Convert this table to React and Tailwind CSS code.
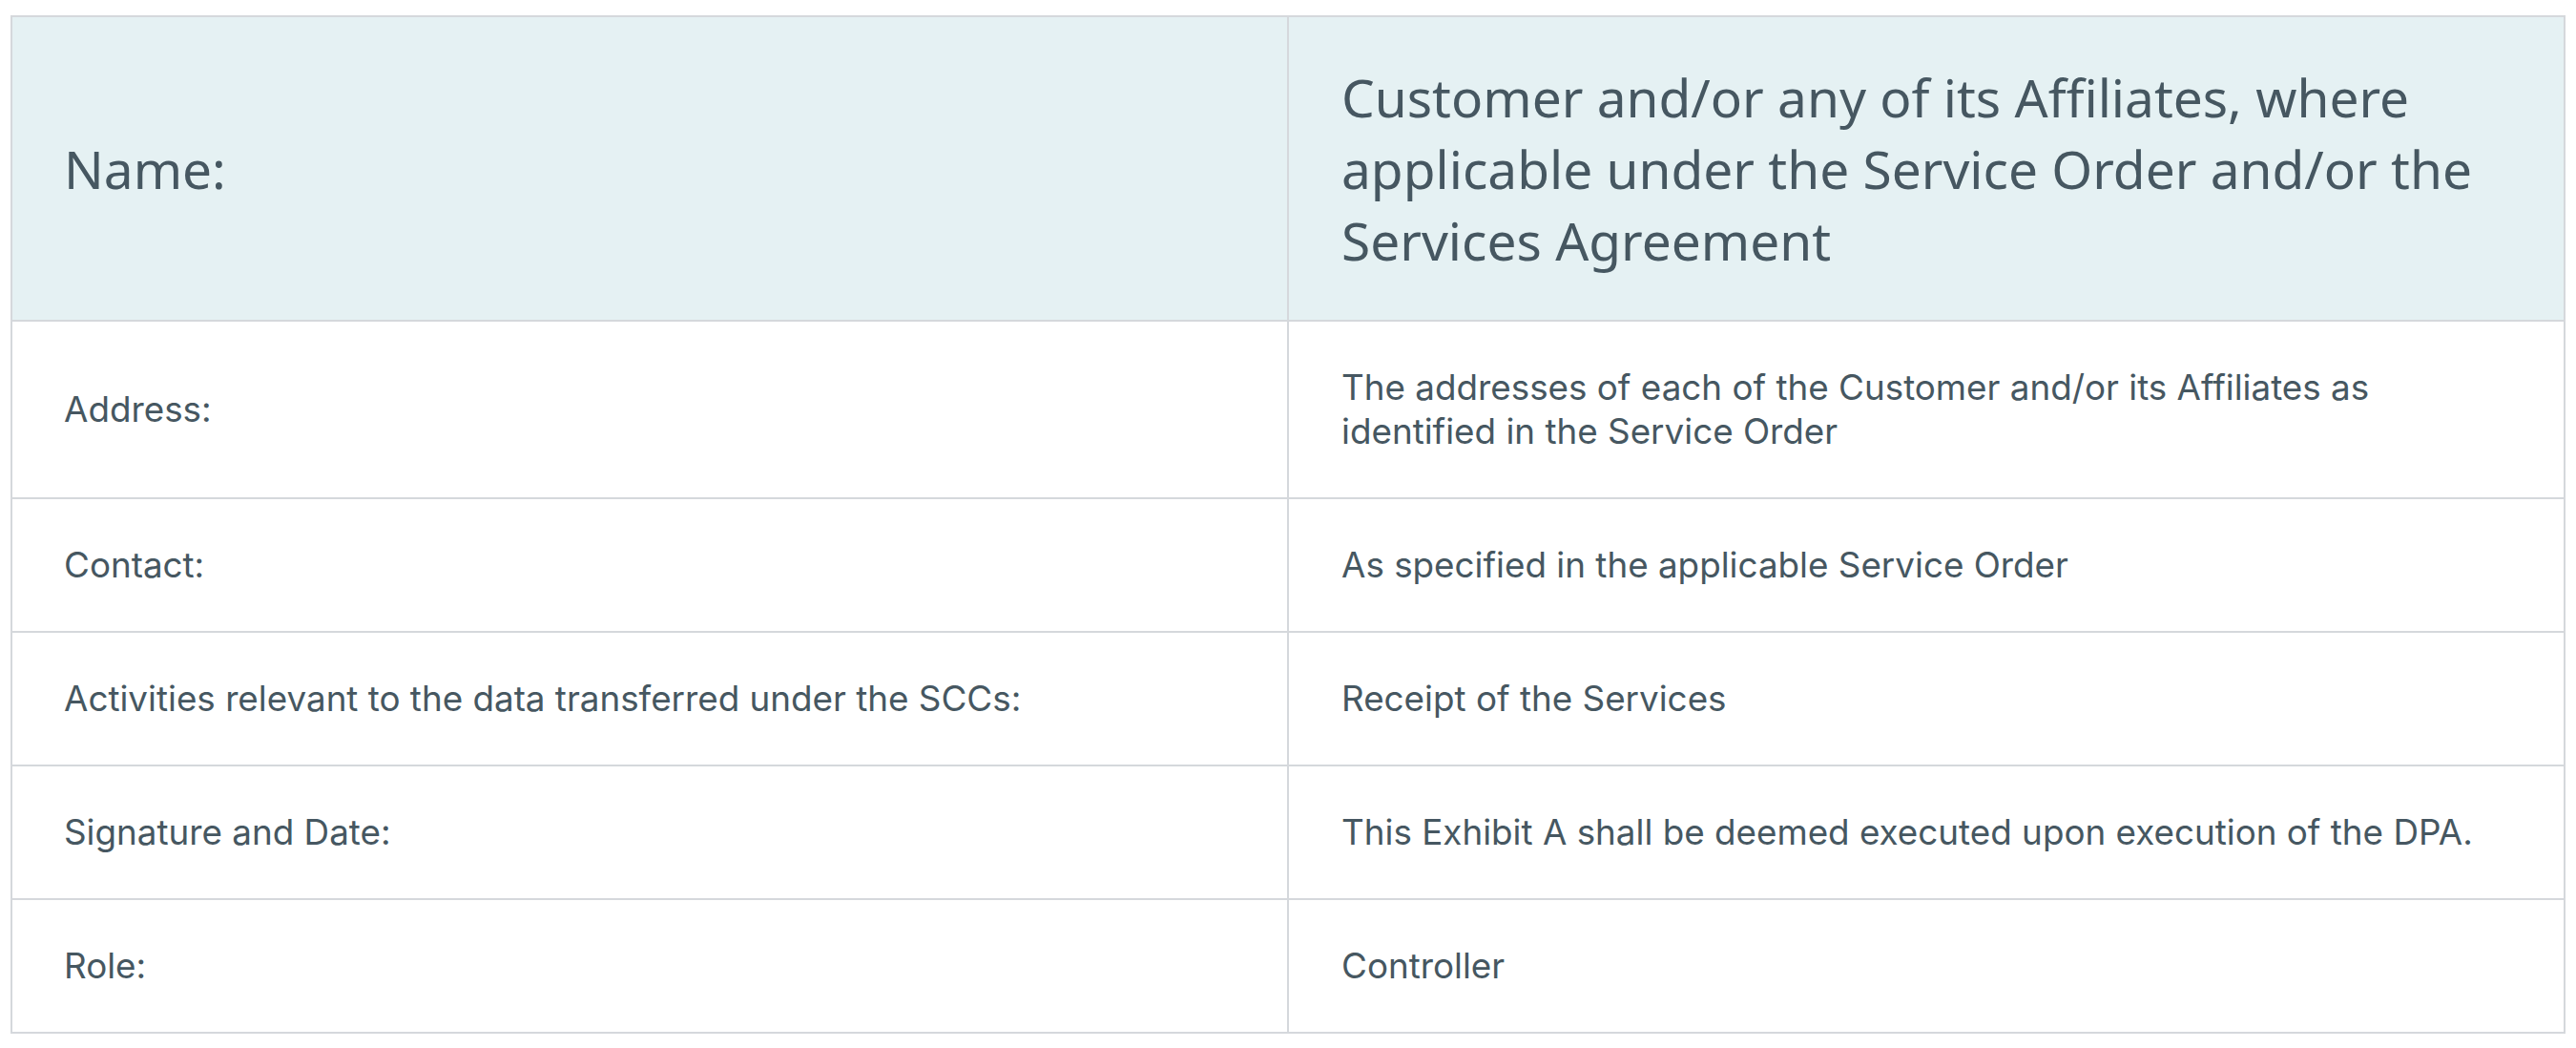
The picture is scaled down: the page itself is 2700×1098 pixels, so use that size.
const rows = [
  {
    label: 'Address:',
    value: 'The addresses of each of the Customer and/or its Affiliates as identified in the Service Order',
  },
  { label: 'Contact:', value: 'As specified in the applicable Service Order' },
  { label: 'Activities relevant to the data transferred under the SCCs:', value: 'Receipt of the Services' },
  { label: 'Signature and Date:', value: 'This Exhibit A shall be deemed executed upon execution of the DPA.' },
  { label: 'Role:', value: 'Controller' },
];

export default function App() {
  return (
    <div className="min-h-screen bg-white px-[11px] pt-[16px]">
      <table className="w-full table-fixed border-collapse text-[#465761]">
        <thead>
          <tr className="bg-[#e5f1f3]">
            <th className="border-2 border-[#d5d8dc] px-[54px] py-[46px] text-left align-middle font-['Noto_Sans',sans-serif] text-[55px] font-normal leading-[75px]">
              Name:
            </th>
            <th className="border-2 border-[#d5d8dc] pl-[55px] pr-[50px] py-[46px] text-left align-middle font-['Noto_Sans',sans-serif] text-[55px] font-normal leading-[75px]">
              Customer and/or any of its Affiliates, where applicable under the Service Order and/or the Services
              Agreement
            </th>
          </tr>
        </thead>
        <tbody className="font-['Inter',sans-serif] text-[36.8px] leading-[46px]">
          {rows.map((row) => (
            <tr key={row.label}>
              <td className="border-2 border-[#d5d8dc] px-[54px] py-[46px] align-middle">{row.label}</td>
              <td className="border-2 border-[#d5d8dc] pl-[55px] pr-[40px] py-[46px] align-middle">{row.value}</td>
            </tr>
          ))}
        </tbody>
      </table>
    </div>
  );
}
